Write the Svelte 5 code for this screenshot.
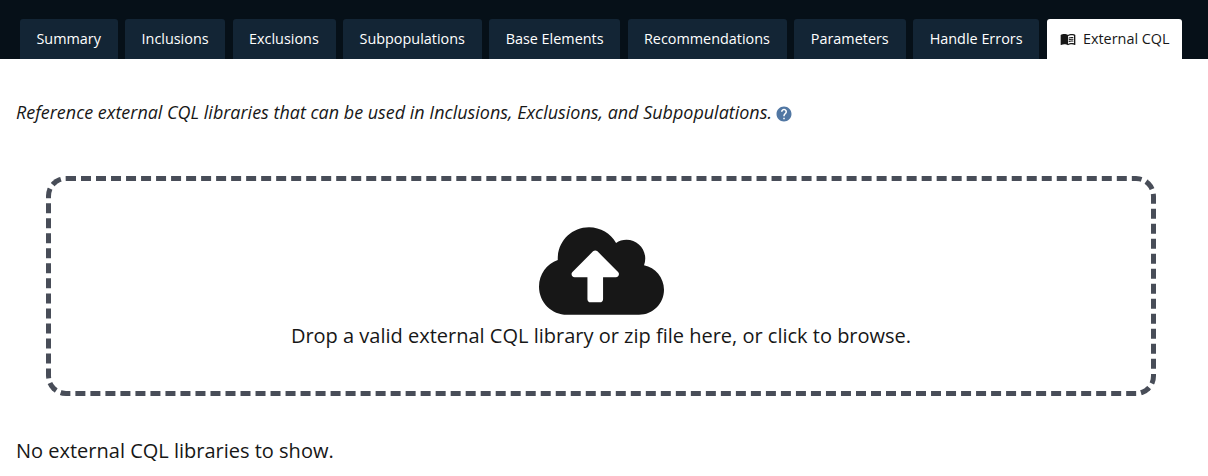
<script>
  const tabs = [
    { label: 'Summary', width: 98 },
    { label: 'Inclusions', width: 100 },
    { label: 'Exclusions', width: 103 },
    { label: 'Subpopulations', width: 139 },
    { label: 'Base Elements', width: 131 },
    { label: 'Recommendations', width: 159 },
    { label: 'Parameters', width: 112 },
    { label: 'Handle Errors', width: 126 },
    { label: 'External CQL', width: 135, active: true }
  ];
</script>

<nav>
  {#each tabs as tab}
    <button class="tab" class:active={tab.active} style="width: {tab.width}px">
      {#if tab.active}
        <svg class="book" viewBox="0 0 24 24" aria-hidden="true">
          <path d="M21 5c-1.11-.35-2.33-.5-3.5-.5-1.95 0-4.05.4-5.5 1.5-1.45-1.1-3.55-1.5-5.5-1.5S2.45 4.9 1 6v14.65c0 .25.25.5.5.5.1 0 .15-.05.25-.05C3.1 20.45 5.05 20 6.5 20c1.95 0 4.05.4 5.5 1.5 1.35-.85 3.8-1.5 5.5-1.5 1.65 0 3.35.3 4.75 1.05.1.05.15.05.25.05.25 0 .5-.25.5-.5V6c-.6-.45-1.25-.75-2-1zm0 13.5c-1.1-.35-2.3-.5-3.5-.5-1.7 0-4.15.65-5.5 1.5V8c1.35-.85 3.8-1.5 5.5-1.5 1.2 0 2.4.15 3.5.5v11.5z" />
          <path d="M17.5 10.5c.88 0 1.73.09 2.5.26V9.24c-.79-.15-1.64-.24-2.5-.24-1.7 0-3.24.29-4.5.83v1.66c1.13-.64 2.7-.99 4.5-.99zM13 12.49v1.66c1.13-.64 2.7-.99 4.5-.99.88 0 1.73.09 2.5.26V11.9c-.79-.15-1.64-.24-2.5-.24-1.7 0-3.24.3-4.5.83zM17.5 14.33c-1.7 0-3.24.29-4.5.83v1.66c1.13-.64 2.7-.99 4.5-.99.88 0 1.73.09 2.5.26v-1.52c-.79-.16-1.64-.24-2.5-.24z" />
        </svg>
      {/if}
      <span>{tab.label}</span>
    </button>
  {/each}
</nav>

<main>
  <p class="intro">
    <em>Reference external CQL libraries that can be used in Inclusions, Exclusions, and Subpopulations.</em>
    <svg class="help" viewBox="0 0 24 24" aria-hidden="true">
      <path d="M12 2C6.48 2 2 6.48 2 12s4.48 10 10 10 10-4.48 10-10S17.52 2 12 2zm1 17h-2v-2h2v2zm2.07-7.75l-.9.92C13.45 12.9 13 13.5 13 15h-2v-.5c0-1.1.45-2.1 1.17-2.83l1.24-1.26c.37-.36.59-.86.59-1.41 0-1.1-.9-2-2-2s-2 .9-2 2H8c0-2.21 1.79-4 4-4s4 1.79 4 4c0 .88-.36 1.68-.93 2.25z" />
    </svg>
  </p>

  <section class="dropzone">
    <svg class="cloud" viewBox="0 0 640 512" aria-hidden="true">
      <path d="M537.6 226.6c4.1-10.7 6.4-22.4 6.4-34.6 0-53-43-96-96-96-19.7 0-38.1 6-53.3 16.2C367 64.2 315.3 32 256 32c-88.4 0-160 71.6-160 160 0 2.7.1 5.4.2 8.1C40.2 219.8 0 273.2 0 336c0 79.5 64.5 144 144 144h368c70.7 0 128-57.3 128-128 0-61.9-44-113.6-102.4-125.4zM393.4 288H328v112c0 8.8-7.2 16-16 16h-48c-8.8 0-16-7.2-16-16V288h-65.4c-14.3 0-21.4-17.2-11.3-27.3l105.4-105.4c6.2-6.2 16.4-6.2 22.6 0l105.4 105.4c10.1 10.1 2.9 27.3-11.3 27.3z" />
    </svg>
    <span>Drop a valid external CQL library or zip file here, or click to browse.</span>
  </section>

  <p class="empty">No external CQL libraries to show.</p>
</main>

<style>
  :global(body) {
    background: #fff;
    color: #171717;
    font-family: 'Open Sans', sans-serif;
    overflow: hidden;
  }
  nav {
    display: flex;
    gap: 7.35px;
    height: 40px;
    padding: 19px 20px 0;
    background: #061018;
  }
  .tab {
    box-sizing: border-box;
    display: flex;
    flex: none;
    align-items: center;
    justify-content: center;
    gap: 7px;
    height: 40px;
    padding: 0 0.6px 0 0;
    border: 0;
    border-radius: 3px 3px 0 0;
    background: #132535;
    color: #fff;
    font: 14.4px/20px 'Open Sans', sans-serif;
    white-space: nowrap;
  }
  .tab.active {
    padding: 0 0 0 1px;
    background: #fff;
    color: #171717;
  }
  .book {
    width: 16px;
    height: 16px;
    fill: currentColor;
  }
  main {
    padding: 40px 16px 0;
  }
  p {
    margin: 0;
  }
  .intro {
    display: flex;
    align-items: center;
    gap: 3.5px;
    height: 26px;
    font-size: 17.97px;
    line-height: 26px;
    white-space: nowrap;
  }
  .help {
    flex: none;
    width: 18px;
    height: 18px;
    margin-top: 3px;
    fill: #5177a3;
  }
  .dropzone {
    box-sizing: border-box;
    display: flex;
    flex-direction: column;
    align-items: center;
    width: 1110px;
    height: 220px;
    margin: 51px 0 0 30px;
    padding-top: 40px;
    border: 5px dashed #484d58;
    border-radius: 20px;
    font-size: 20px;
    line-height: 30px;
    white-space: nowrap;
  }
  .cloud {
    width: 125px;
    height: 100px;
    fill: #171717;
  }
  .empty {
    margin-top: 40px;
    font-size: 20px;
    line-height: 30px;
  }
</style>
